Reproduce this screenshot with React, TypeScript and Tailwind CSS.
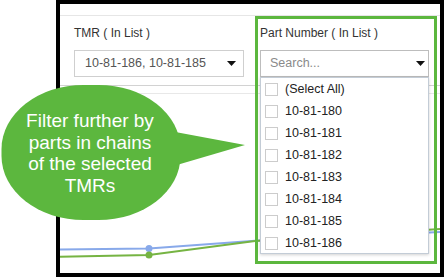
const parts = [
  "(Select All)",
  "10-81-180",
  "10-81-181",
  "10-81-182",
  "10-81-183",
  "10-81-184",
  "10-81-185",
  "10-81-186",
];

const Caret = () => (
  <svg width="9" height="5" viewBox="0 0 9 5" className="shrink-0">
    <path d="M0 0 H9 L4.5 5 Z" fill="#111" />
  </svg>
);

const Callout = () => (
  <div className="absolute left-0 top-[85px] w-[250px] h-[140px]">
    <svg width="250" height="140" viewBox="0 0 250 140" className="absolute inset-0">
      <rect x="1.5" y="0" width="179" height="135" rx="82" ry="64" fill="#5cb73e" />
      <path d="M170 46 L245 60 L170 82 Z" fill="#5cb73e" />
    </svg>
    {/* callout text */}
    <div className="absolute left-[20px] top-[25px] w-[140px] text-center text-white text-[19px] leading-[21.5px] font-['Liberation_Sans',Arial,sans-serif]">
      Filter further by
      <br />
      parts in chains
      <br />
      of the selected
      <br />
      TMRs
    </div>
  </div>
);

const Chart = () => (
  <svg width="380" height="179" viewBox="0 0 380 179" className="block">
    <polyline
      points="0,155.5 89,154.5 195,146.7 380,138"
      fill="none"
      stroke="#88a9ea"
      strokeWidth="2"
    />
    <polyline
      points="0,162.7 89,161 195,147 380,135"
      fill="none"
      stroke="#76b443"
      strokeWidth="2"
    />
    <circle cx="89" cy="154.5" r="3.5" fill="#88a9ea" />
    <circle cx="89" cy="161" r="3.5" fill="#76b443" />
  </svg>
);

export default function App() {
  return (
    <div className="relative w-[444px] h-[277px] overflow-hidden bg-white font-['Liberation_Sans',Arial,sans-serif]">
      {/* Framed report */}
      <div className="ml-[56px] w-[388px] h-[277px] border-4 border-black flex flex-col">
        <div className="h-[12px] border-b border-[#e6e6e6]" />

        {/* Filters */}
        <div className="flex gap-[16px] pl-[14px] pr-[11px] pt-[10px] pb-[8px] border-b border-[#d2d2d2]">
          <div className="w-[170px] flex flex-col gap-[10px]">
            <div className="text-[12px] leading-[14px] text-[#333]">TMR ( In List )</div>
            <div className="h-[27px] border border-[#cfcfcf] flex items-center justify-between pl-[10px] pr-[7px]">
              <span className="text-[12.5px] text-[#555]">10-81-186, 10-81-185</span>
              <Caret />
            </div>
          </div>

          <div className="relative w-[169px] flex flex-col gap-[10px]">
            <div className="text-[12px] leading-[14px] text-[#333]">Part Number ( In List )</div>
            <div className="relative h-[27px] border border-[#bdbdbd] flex items-center justify-between pl-[9px] pr-[3px]">
              <span className="text-[12.5px] text-[#8a8a8a]">Search...</span>
              <Caret />
              {/* open list */}
              <div className="absolute left-[-1px] right-[-1px] top-[26px] h-[177px] bg-white border border-[#c3ccd6] shadow-[0_1px_3px_rgba(0,0,0,0.18)] z-10">
                {parts.map((p) => (
                  <div key={p} className="h-[22px] flex items-center gap-[7px] pl-[4px]">
                    <span className="w-[13px] h-[13px] border border-[#cccccc] bg-white" />
                    <span className="text-[12.5px] text-[#222]">{p}</span>
                  </div>
                ))}
              </div>
            </div>
          </div>
        </div>

        {/* Chart */}
        <div className="mt-[7px] border-t border-[#e8e8e8] flex-1 overflow-hidden">
          <Chart />
        </div>
      </div>

      {/* highlight around the part filter */}
      <div className="absolute left-[255px] top-[16px] w-[182px] h-[248px] border-[3px] border-[#5cb73e] z-20" />

      <Callout />
    </div>
  );
}
